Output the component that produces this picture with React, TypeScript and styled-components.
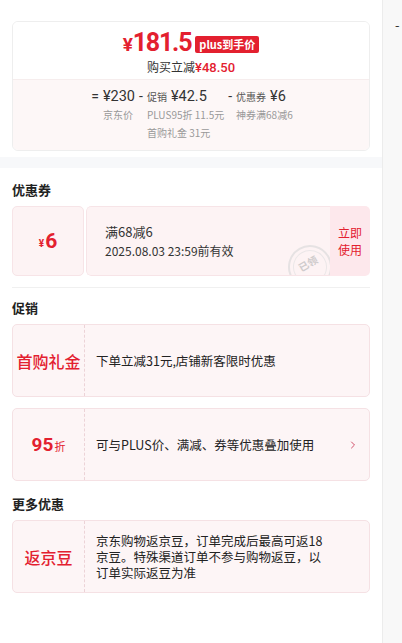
import React from "react";
import styled, { createGlobalStyle } from "styled-components";
import { ChevronRight } from "lucide-react";

const GlobalStyle = createGlobalStyle`
  html, body {
    margin: 0;
    padding: 0;
    background: #ffffff;
  }
  body {
    font-family: "Noto Sans CJK SC", "Noto Sans", sans-serif;
    color: #333;
  }
  * { box-sizing: border-box; }
`;

const App = () => {
  return (
    <Page>
      <GlobalStyle />
      <Main>
        <Top>
          <PriceCard>
            <PriceHead>
              <PriceLine>
                <BigPrice>
                  <small>¥</small>181.5
                </BigPrice>
                <PlusBadge>plus到手价</PlusBadge>
              </PriceLine>
              <Saved>
                购买立减<em>¥48.50</em>
              </Saved>
            </PriceHead>
            <Formula>
              <Term>
                <Op>=</Op>
                <TermBody>
                  <TermValue>¥230</TermValue>
                  <TermNote>京东价</TermNote>
                </TermBody>
              </Term>
              <Term>
                <Op>-</Op>
                <TermBody>
                  <TermValue>
                    <span>促销</span>¥42.5
                  </TermValue>
                  <TermNote>PLUS95折 11.5元</TermNote>
                  <TermNote>首购礼金 31元</TermNote>
                </TermBody>
              </Term>
              <Term>
                <Op>-</Op>
                <TermBody>
                  <TermValue>
                    <span>优惠券</span>¥6
                  </TermValue>
                  <TermNote>神券满68减6</TermNote>
                </TermBody>
              </Term>
            </Formula>
          </PriceCard>
        </Top>

        <Band />

        <Body>
          <Heading>优惠券</Heading>
          <Coupon>
            <CouponAmount>
              <small>¥</small>6
            </CouponAmount>
            <CouponMain>
              <CouponInfo>
                <CouponRule>满68减6</CouponRule>
                <CouponDate>2025.08.03 23:59前有效</CouponDate>
                <Stamp>
                  <span>已领</span>
                </Stamp>
              </CouponInfo>
              <UseNow>
                <span>立即</span>
                <span>使用</span>
              </UseNow>
            </CouponMain>
          </Coupon>

          <Divider />

          <Heading>促销</Heading>
          <PromoList>
            <Promo>
              <PromoTag>首购礼金</PromoTag>
              <PromoText>下单立减31元,店铺新客限时优惠</PromoText>
            </Promo>
            <Promo>
              <PromoTag>
                <Big>95</Big>
                <Unit>折</Unit>
              </PromoTag>
              <PromoText>可与PLUS价、满减、券等优惠叠加使用</PromoText>
              <Arrow>
                <ChevronRight size={12} strokeWidth={2} />
              </Arrow>
            </Promo>
          </PromoList>

          <Heading $gap={21}>更多优惠</Heading>
          <Promo>
            <PromoTag>返京豆</PromoTag>
            <PromoText $wrap>
              京东购物返京豆，订单完成后最高可返18京豆。特殊渠道订单不参与购物返豆，以订单实际返豆为准
            </PromoText>
          </Promo>
        </Body>
      </Main>
      <Side>
        <Dash>-</Dash>
      </Side>
    </Page>
  );
};

export default App;

const Page = styled.div`
  display: flex;
  width: 402px;
  height: 643px;
  overflow: hidden;
`;

const Main = styled.div`
  width: 382px;
  flex-shrink: 0;
  background: #fff;
`;

const Side = styled.div`
  position: relative;
  flex: 1;
  background: #f8f8f8;
  border-left: 1px solid #ececec;
`;

const Dash = styled.span`
  position: absolute;
  left: 12px;
  top: 15px;
  font-size: 13px;
  color: #333;
`;

const Top = styled.div`
  padding: 21px 12px 6px;
`;

const PriceCard = styled.div`
  width: 358px;
  border: 1px solid #eee;
  border-radius: 6px;
  overflow: hidden;
`;

const PriceHead = styled.div`
  display: flex;
  flex-direction: column;
  align-items: center;
  height: 57px;
  padding-top: 9px;
  background: #fff;
`;

const PriceLine = styled.div`
  display: flex;
  align-items: center;
  gap: 4px;
  height: 26px;
`;

const BigPrice = styled.span`
  font-family: "Roboto", "Liberation Sans", sans-serif;
  font-weight: 700;
  font-size: 25px;
  letter-spacing: -1.2px;
  color: #e3202f;
  line-height: 26px;

  small {
    font-size: 19px;
    margin-right: 1px;
  }
`;

const PlusBadge = styled.span`
  height: 17px;
  padding: 0 4px;
  background: #e3202f;
  color: #fff;
  font-size: 11px;
  font-weight: 700;
  line-height: 17px;
  border-radius: 2px;
`;

const Saved = styled.div`
  margin-top: 1px;
  font-size: 12px;
  line-height: 17px;
  color: #333;

  em {
    font-style: normal;
    color: #e3202f;
    font-family: "Roboto", "Liberation Sans", sans-serif;
    font-weight: 500;
    font-size: 13px;
  }
`;

const Formula = styled.div`
  display: flex;
  justify-content: center;
  gap: 4px;
  height: 71px;
  padding-top: 7px;
  padding-left: 2px;
  background: #fdf7f7;
  border-top: 1px solid #f6eded;
`;

const Term = styled.div`
  display: flex;
  gap: 4px;
`;

const Op = styled.span`
  font-family: "Roboto", "Liberation Sans", sans-serif;
  font-size: 14px;
  line-height: 19px;
  color: #333;
`;

const TermBody = styled.div`
  display: flex;
  flex-direction: column;
`;

const TermValue = styled.div`
  font-size: 14.5px;
  line-height: 19px;
  color: #333;
  font-family: "Roboto", "Noto Sans CJK SC", sans-serif;

  span {
    font-family: "Noto Sans CJK SC", sans-serif;
    font-size: 10px;
    color: #555;
    margin-right: 4px;
  }
`;

const TermNote = styled.div`
  font-size: 10px;
  line-height: 18px;
  color: #999;
`;

const Band = styled.div`
  height: 11px;
  background: #f7f8fa;
`;

const Body = styled.div`
  padding: 13px 12px 0;
`;

const Heading = styled.h3<{ $gap?: number }>`
  margin: 0 0 7px;
  margin-top: ${(p) => (p.$gap ? p.$gap - 7 : 0)}px;
  font-size: 13px;
  line-height: 18px;
  font-weight: 700;
  color: #222;
`;

const Coupon = styled.div`
  display: flex;
  gap: 2px;
  width: 358px;
  height: 70px;
`;

const CouponAmount = styled.div`
  width: 72px;
  display: flex;
  align-items: center;
  justify-content: center;
  background: #fdf3f4;
  border: 1px solid #f7e4e7;
  border-radius: 5px;
  color: #e3202f;
  font-family: "Roboto", "Liberation Sans", sans-serif;
  font-weight: 700;
  font-size: 21px;

  small {
    font-size: 10px;
    margin-right: 1px;
    margin-top: 4px;
  }
`;

const CouponMain = styled.div`
  flex: 1;
  display: flex;
  border-radius: 5px;
  overflow: hidden;
`;

const CouponInfo = styled.div`
  position: relative;
  flex: 1;
  display: flex;
  flex-direction: column;
  justify-content: center;
  gap: 3px;
  padding-left: 18px;
  background: #fdf3f4;
  border: 1px solid #f7e4e7;
  border-right: none;
  border-radius: 5px 0 0 5px;
  overflow: hidden;
`;

const CouponRule = styled.div`
  font-size: 13px;
  line-height: 17px;
  color: #333;
`;

const CouponDate = styled.div`
  font-size: 12px;
  line-height: 16px;
  color: #333;
`;

const Stamp = styled.div`
  position: absolute;
  right: -2px;
  bottom: -14px;
  width: 44px;
  height: 44px;
  border: 2px solid #e6e2e3;
  border-radius: 50%;
  display: flex;
  align-items: center;
  justify-content: center;
  transform: rotate(-30deg);

  span {
    font-size: 10px;
    line-height: 12px;
    color: #cfcbcc;
    font-weight: 700;
    margin-top: -8px;
  }

  &::after {
    content: "";
    position: absolute;
    inset: 3px;
    border: 1px solid #ebe7e8;
    border-radius: 50%;
  }
`;

const UseNow = styled.div`
  width: 40px;
  display: flex;
  flex-direction: column;
  align-items: center;
  justify-content: center;
  background: #fde8ec;
  font-size: 12px;
  line-height: 17.5px;
  color: #e3202f;
`;

const Divider = styled.div`
  width: 358px;
  height: 1px;
  margin: 11px 0 11px;
  background: #f0f0f0;
`;

const PromoList = styled.div`
  display: flex;
  flex-direction: column;
  gap: 11px;
`;

const Promo = styled.div`
  display: flex;
  align-items: stretch;
  width: 358px;
  height: 73px;
  background: #fdf5f6;
  border: 1px solid #f5e1e4;
  border-radius: 5px;
`;

const PromoTag = styled.div`
  width: 72px;
  flex-shrink: 0;
  display: flex;
  align-items: center;
  justify-content: center;
  border-right: 1px dashed #ecd3d7;
  color: #e3202f;
  font-size: 16px;
  font-weight: 500;
`;

const Big = styled.span`
  font-family: "Roboto", "Liberation Sans", sans-serif;
  font-weight: 700;
  font-size: 19px;
`;

const Unit = styled.span`
  font-size: 11px;
  font-weight: 400;
  margin-left: 1px;
  margin-top: 3px;
`;

const PromoText = styled.div<{ $wrap?: boolean }>`
  flex: 1;
  display: flex;
  align-items: center;
  padding-left: 11px;
  padding-right: ${(p) => (p.$wrap ? "42px" : "0")};
  font-size: 12.5px;
  line-height: 16px;
  color: #222;
`;

const Arrow = styled.div`
  display: flex;
  align-items: center;
  padding-right: 10px;
  color: #d2506a;
`;
